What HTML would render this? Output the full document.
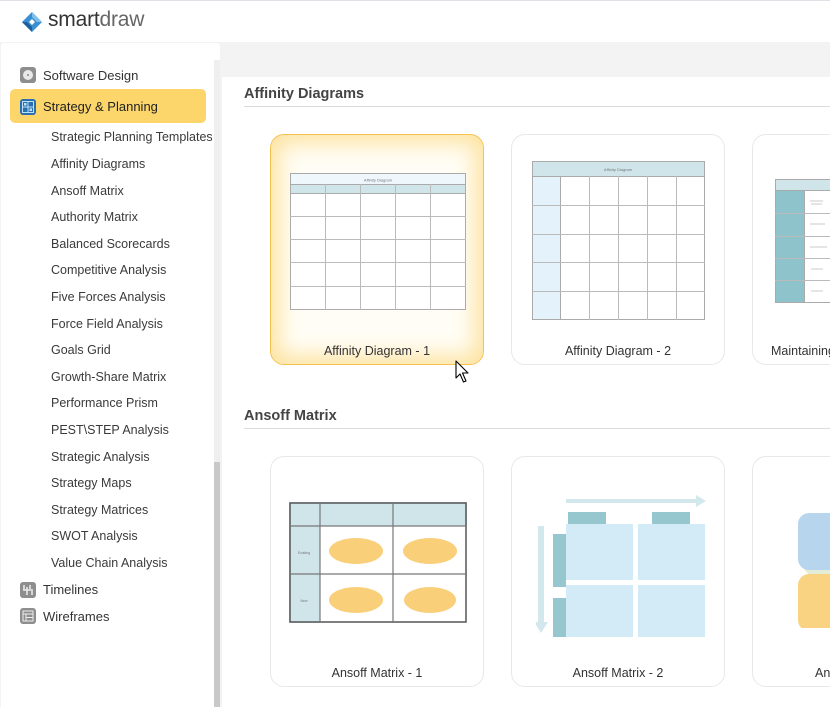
<!DOCTYPE html>
<html><head><meta charset="utf-8">
<style>
*{margin:0;padding:0;box-sizing:border-box}
body{width:830px;height:707px;overflow:hidden;background:#fff;font-family:"Liberation Sans",sans-serif;position:relative}
.abs{position:absolute}
#top{left:0;top:0;width:830px;height:42px;background:#fff;border-top:1px solid #dfe1e6}
#gray{left:0;top:42px;width:830px;height:665px;background:#f3f3f4}
#side{left:1px;top:43px;width:219px;height:664px;background:#fff;border-radius:3px 3px 0 0}
#track{left:214px;top:60px;width:6px;height:647px;background:#efefef}
#thumb{left:214px;top:462px;width:6px;height:245px;background:#c9c9c9}
#main{left:222px;top:77px;width:608px;height:630px;background:#fff}
.nav{position:absolute;left:43px;font-size:13px;color:#333}
.sub{position:absolute;left:51px;font-size:12.5px;color:#3a3a3a}
.ico{position:absolute;left:20px;width:16px;height:16px;border-radius:3px}
.h{position:absolute;left:244px;font-size:14.5px;font-weight:bold;color:#444}
.hl{position:absolute;left:244px;width:586px;height:1px;background:#dcdcdc}
.card{position:absolute;width:214px;height:231px;border:1px solid #e8e8e8;border-radius:14px;background:#fff}
.cap{position:absolute;width:214px;text-align:center;font-size:12.5px;color:#333}
</style></head><body>
<div class="abs" id="top"></div>
<svg class="abs" style="left:21px;top:11px" width="22" height="22" viewBox="0 0 22 22">
<path d="M11 1 L21 11 L11 21 L1 11Z" fill="#3a8fd1"/>
<path d="M11 1 L21 11 L16 11 L11 6Z" fill="#7fc0ec"/>
<path d="M1 11 L11 21 L11 16 L6 11Z" fill="#1e5f9c"/>
<path d="M8 11 L11 8 L14 11 L11 14Z" fill="#fff"/>
</svg>
<div class="abs" style="left:48px;top:8px;font-size:21px;letter-spacing:-0.2px;color:#333">smart<span style="color:#666">draw</span></div>
<div class="abs" id="gray"></div>
<div class="abs" id="side"></div>
<div class="abs" id="track"></div>
<div class="abs" id="thumb"></div>
<div class="abs" id="main"></div>

<div class="ico" style="top:67px;background:#8e8e8e"><div style="position:absolute;left:3px;top:3px;width:10px;height:10px;border-radius:50%;background:#e9e9e9"></div><div style="position:absolute;left:7px;top:7px;width:2px;height:2px;border-radius:50%;background:#888"></div></div>
<div class="nav" style="top:68px">Software Design</div>
<div class="abs" style="left:10px;top:89px;width:196px;height:34px;background:#fcd56b;border-radius:5px"></div>
<div class="ico" style="top:99px;background:#2a6fb0"><svg width="16" height="16"><rect x="2.5" y="2.5" width="11" height="11" fill="none" stroke="#bfe0f7" stroke-width="1"/><path d="M8 2.5V13.5M2.5 8H13.5" stroke="#bfe0f7"/><rect x="4" y="4" width="2.5" height="2.5" fill="#bfe0f7"/><rect x="9.5" y="9.5" width="2.5" height="2.5" fill="#bfe0f7"/></svg></div>
<div class="nav" style="top:99px;color:#222">Strategy &amp; Planning</div>
<div class="sub" style="top:130px">Strategic Planning Templates</div>
<div class="sub" style="top:157px">Affinity Diagrams</div>
<div class="sub" style="top:184px">Ansoff Matrix</div>
<div class="sub" style="top:210px">Authority Matrix</div>
<div class="sub" style="top:237px">Balanced Scorecards</div>
<div class="sub" style="top:263px">Competitive Analysis</div>
<div class="sub" style="top:290px">Five Forces Analysis</div>
<div class="sub" style="top:317px">Force Field Analysis</div>
<div class="sub" style="top:343px">Goals Grid</div>
<div class="sub" style="top:370px">Growth-Share Matrix</div>
<div class="sub" style="top:396px">Performance Prism</div>
<div class="sub" style="top:423px">PEST\STEP Analysis</div>
<div class="sub" style="top:450px">Strategic Analysis</div>
<div class="sub" style="top:476px">Strategy Maps</div>
<div class="sub" style="top:503px">Strategy Matrices</div>
<div class="sub" style="top:529px">SWOT Analysis</div>
<div class="sub" style="top:556px">Value Chain Analysis</div>
<div class="ico" style="top:582px;background:#8e8e8e"><svg width="16" height="16"><path d="M4 3V8M7 5V13M10 3V7M12 9V13M3 8H13" stroke="#eee" stroke-width="1.5"/></svg></div>
<div class="nav" style="top:582px">Timelines</div>
<div class="ico" style="top:608px;background:#8e8e8e"><svg width="16" height="16"><rect x="3" y="3" width="10" height="10" fill="none" stroke="#eee"/><path d="M3 6H13M6 6V13M6 9.5H13" stroke="#eee"/></svg></div>
<div class="nav" style="top:609px">Wireframes</div>

<div class="h" style="top:86px">Affinity Diagrams</div>
<div class="hl" style="top:106px"></div>
<div class="h" style="top:408px">Ansoff Matrix</div>
<div class="hl" style="top:428px"></div>

<div class="card" style="left:270px;top:134px;border:1px solid #f5c24f;background:#fffdf5;box-shadow:inset 0 0 22px 8px #fde3a0"></div>
<div class="card" style="left:511px;top:134px"></div>
<div class="card" style="left:752px;top:134px;width:100px"></div>
<div class="cap" style="left:270px;top:344px">Affinity Diagram - 1</div>
<div class="cap" style="left:511px;top:344px">Affinity Diagram - 2</div>
<div class="abs" style="left:771px;top:344px;font-size:12.5px;color:#333">Maintaining</div>

<svg class="abs" style="left:290px;top:173px" width="176" height="138">
<rect x="0.5" y="0.5" width="175" height="11" fill="#eef7fc" stroke="#aaa"/>
<text x="88" y="8.5" font-size="4" text-anchor="middle" fill="#777" font-family="Liberation Sans">Affinity Diagram</text>
<rect x="0.5" y="11.5" width="175" height="9" fill="#cfe5ea" stroke="#aaa"/>
<rect x="0.5" y="20.5" width="175" height="116" fill="#fff" stroke="#aaa"/>
<g stroke="#bbb"><path d="M35.5 11V137M70.5 11V137M105.5 11V137M140.5 11V137M0 43.5H176M0 66.5H176M0 89.5H176M0 113.5H176"/></g>
</svg>
<svg class="abs" style="left:532px;top:161px" width="173" height="159">
<rect x="0.5" y="0.5" width="172" height="15" fill="#cfe5ea" stroke="#aaa"/>
<text x="86" y="10" font-size="4" text-anchor="middle" fill="#777" font-family="Liberation Sans">Affinity Diagram</text>
<rect x="0.5" y="15.5" width="28" height="143" fill="#e4f3fb" stroke="#aaa"/>
<rect x="28.5" y="15.5" width="144" height="143" fill="#fff" stroke="#aaa"/>
<g stroke="#bbb"><path d="M57.5 15V159M86.5 15V159M115.5 15V159M144.5 15V159M0 44.5H173M0 73.5H173M0 101.5H173M0 130.5H173"/></g>
</svg>
<svg class="abs" style="left:775px;top:179px" width="55" height="124">
<rect x="0.5" y="0.5" width="60" height="11" fill="#cfe5ea" stroke="#aaa"/>
<rect x="0.5" y="11.5" width="29" height="112" fill="#8fc3cb" stroke="#aaa"/>
<rect x="29.5" y="11.5" width="30" height="112" fill="#fff" stroke="#aaa"/>
<g stroke="#bbb"><path d="M0 34.5H60M0 57.5H60M0 79.5H60M0 101.5H60"/></g>
<g stroke="#bbb" stroke-width="0.8"><path d="M35 22H48M36 25H47M35 45H50M35 68H52M36 90H48M36 112H48"/></g>
</svg>

<div class="card" style="left:270px;top:456px"></div>
<div class="card" style="left:511px;top:456px"></div>
<div class="card" style="left:752px;top:456px;width:100px"></div>
<div class="cap" style="left:270px;top:666px">Ansoff Matrix - 1</div>
<div class="cap" style="left:511px;top:666px">Ansoff Matrix - 2</div>
<div class="abs" style="left:815px;top:666px;font-size:12.5px;color:#333">An</div>

<svg class="abs" style="left:289px;top:502px" width="178" height="121">
<rect x="0" y="0" width="178" height="121" fill="#fff"/>
<rect x="0" y="0" width="178" height="24" fill="#cfe5ea"/>
<rect x="0" y="0" width="31" height="121" fill="#cfe5ea"/>
<rect x="1" y="1" width="176" height="119" fill="none" stroke="#555" stroke-width="1.5"/>
<path d="M31 0V121M104 0V121M0 24H178M0 72H178" stroke="#777" stroke-width="1.2"/>
<g fill="#f9cf79"><ellipse cx="67" cy="49" rx="27" ry="13"/><ellipse cx="141" cy="49" rx="27" ry="13"/><ellipse cx="67" cy="98" rx="27" ry="13"/><ellipse cx="141" cy="98" rx="26" ry="13"/></g>
<g font-family="Liberation Sans" font-size="3.5" fill="#777" text-anchor="middle"><text x="15" y="52">Existing</text><text x="15" y="100">New</text></g>
</svg>
<svg class="abs" style="left:536px;top:492px" width="175" height="145">
<path d="M30 7H160V3L170 9L160 15V11H30Z" fill="#d2e8ec"/>
<path d="M2 34H8V130H12L5 141L-2 130H2Z" fill="#d2e8ec"/>
<rect x="32" y="20" width="38" height="12" fill="#96c7cf"/>
<rect x="116" y="20" width="38" height="12" fill="#96c7cf"/>
<rect x="17" y="42" width="13" height="53" fill="#96c7cf"/>
<rect x="17" y="106" width="13" height="53" fill="#96c7cf"/>
<rect x="30" y="32" width="67" height="56" fill="#d3ebf7"/>
<rect x="102" y="32" width="67" height="56" fill="#d3ebf7"/>
<rect x="30" y="93" width="67" height="56" fill="#d3ebf7"/>
<rect x="102" y="93" width="67" height="56" fill="#d3ebf7"/>
</svg>
<svg class="abs" style="left:786px;top:508px" width="44" height="120">
<path d="M14 57L26 44H44V70H26Z" fill="#e3ecd6"/>
<rect x="12" y="5" width="50" height="57" rx="11" fill="#b7d6ee"/>
<rect x="12" y="66" width="50" height="57" rx="11" fill="#f9d282"/>
</svg>

<svg class="abs" style="left:455px;top:360px" width="16" height="24" viewBox="0 0 16 24">
<path d="M1 1V18L5 14L8.5 22L11 21L7.5 13H13Z" fill="#fff" stroke="#000" stroke-width="1.1" stroke-linejoin="round"/>
</svg>
</body></html>
